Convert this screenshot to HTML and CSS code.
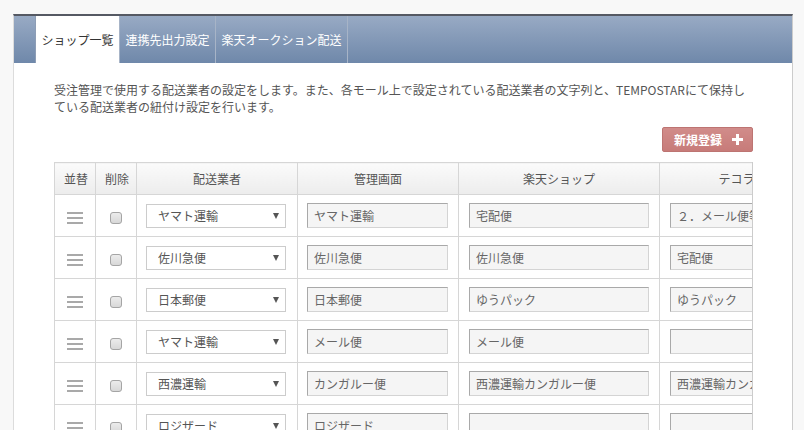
FILE: index.html
```html
<!DOCTYPE html>
<html lang="ja">
<head>
<meta charset="utf-8">
<title>配送業者設定</title>
<link rel="stylesheet" href="styles.css">
</head>
<body>
<div class="page">
  <div class="panel">
    <ul class="tabs">
      <li class="tab active">ショップ一覧</li>
      <li class="tab">連携先出力設定</li>
      <li class="tab">楽天オークション配送</li>
    </ul>
    <div class="content">
      <p class="desc">受注管理で使用する配送業者の設定をします。また、各モール上で設定されている配送業者の文字列と、TEMPOSTARにて保持し<br>ている配送業者の紐付け設定を行います。</p>
      <div class="actions">
        <button class="btn-add" type="button">新規登録<svg class="plus" width="11" height="11" viewBox="0 0 11 11"><rect x="4" y="0" width="3" height="11" fill="#fff"/><rect x="0" y="4" width="11" height="3" fill="#fff"/></svg></button>
      </div>
      <div class="table-wrap">
        <table class="grid">
          <colgroup>
            <col class="c-sort"><col class="c-del"><col class="c-carrier"><col class="c-admin"><col class="c-rakuten"><col class="c-tecoras">
          </colgroup>
          <thead>
            <tr><th>並替</th><th>削除</th><th>配送業者</th><th>管理画面</th><th>楽天ショップ</th><th>テコラス</th></tr>
          </thead>
          <tbody>
            <tr>
              <td class="center"><span class="handle"><i></i><i></i><i></i></span></td>
              <td class="center"><input class="chk" type="checkbox"></td>
              <td class="sel-cell"><div class="select"><select><option>ヤマト運輸</option></select></div></td>
              <td><input class="txt w-admin" type="text" value="ヤマト運輸"></td>
              <td class="pad10"><input class="txt w-rakuten" type="text" value="宅配便"></td>
              <td class="pad10"><input class="txt w-last" type="text" value="２．メール便等"></td>
            </tr>
            <tr>
              <td class="center"><span class="handle"><i></i><i></i><i></i></span></td>
              <td class="center"><input class="chk" type="checkbox"></td>
              <td class="sel-cell"><div class="select"><select><option>佐川急便</option></select></div></td>
              <td><input class="txt w-admin" type="text" value="佐川急便"></td>
              <td class="pad10"><input class="txt w-rakuten" type="text" value="佐川急便"></td>
              <td class="pad10"><input class="txt w-last" type="text" value="宅配便"></td>
            </tr>
            <tr>
              <td class="center"><span class="handle"><i></i><i></i><i></i></span></td>
              <td class="center"><input class="chk" type="checkbox"></td>
              <td class="sel-cell"><div class="select"><select><option>日本郵便</option></select></div></td>
              <td><input class="txt w-admin" type="text" value="日本郵便"></td>
              <td class="pad10"><input class="txt w-rakuten" type="text" value="ゆうパック"></td>
              <td class="pad10"><input class="txt w-last" type="text" value="ゆうパック"></td>
            </tr>
            <tr>
              <td class="center"><span class="handle"><i></i><i></i><i></i></span></td>
              <td class="center"><input class="chk" type="checkbox"></td>
              <td class="sel-cell"><div class="select"><select><option>ヤマト運輸</option></select></div></td>
              <td><input class="txt w-admin" type="text" value="メール便"></td>
              <td class="pad10"><input class="txt w-rakuten" type="text" value="メール便"></td>
              <td class="pad10"><input class="txt w-last" type="text" value=""></td>
            </tr>
            <tr>
              <td class="center"><span class="handle"><i></i><i></i><i></i></span></td>
              <td class="center"><input class="chk" type="checkbox"></td>
              <td class="sel-cell"><div class="select"><select><option>西濃運輸</option></select></div></td>
              <td><input class="txt w-admin" type="text" value="カンガルー便"></td>
              <td class="pad10"><input class="txt w-rakuten" type="text" value="西濃運輸カンガルー便"></td>
              <td class="pad10"><input class="txt w-last" type="text" value="西濃運輸カンガルー便"></td>
            </tr>
            <tr>
              <td class="center"><span class="handle"><i></i><i></i><i></i></span></td>
              <td class="center"><input class="chk" type="checkbox"></td>
              <td class="sel-cell"><div class="select"><select><option>ロジザード</option></select></div></td>
              <td><input class="txt w-admin" type="text" value="ロジザード"></td>
              <td class="pad10"><input class="txt w-rakuten" type="text" value=""></td>
              <td class="pad10"><input class="txt w-last" type="text" value=""></td>
            </tr>
            <tr>
              <td class="center"><span class="handle"><i></i><i></i><i></i></span></td>
              <td class="center"><input class="chk" type="checkbox"></td>
              <td class="sel-cell"><div class="select"><select><option>福山通運</option></select></div></td>
              <td><input class="txt w-admin" type="text" value="福山通運"></td>
              <td class="pad10"><input class="txt w-rakuten" type="text" value=""></td>
              <td class="pad10"><input class="txt w-last" type="text" value=""></td>
            </tr>
          </tbody>
        </table>
      </div>
    </div>
  </div>
</div>
</body>
</html>
```

FILE: styles.css
```css
html, body {
  margin: 0;
  padding: 0;
  overflow: hidden;
}
body {
  background: #f8f8f8;
  font-family: "Noto Sans CJK JP", "Noto Sans", sans-serif;
  font-size: 12px;
  color: #555;
}
.page {
  padding: 14px 11px 0 13px;
}
.panel {
  background: #fff;
  border-top: 2px solid #555963;
  border-left: 1px solid #dcdcdc;
  border-right: 1px solid #cccccc;
  min-height: 420px;
}
.tabs {
  list-style: none;
  margin: 0;
  padding: 0 0 0 21px;
  display: flex;
  height: 47px;
  background: linear-gradient(#98aac4, #6f88aa);
}
.tab {
  display: flex;
  align-items: center;
  padding: 0 5.5px;
  border-left: 1px solid #a7b4c7;
  color: #fff;
  line-height: 1;
  white-space: nowrap;
}
.tab:last-child {
  border-right: 1px solid #a7b4c7;
}
.tab.active {
  background: #fff;
  color: #333;
  border-left-color: #8d9db5;
}
.content {
  padding: 18px 39px 0 40px;
}
.desc {
  margin: 0 -8px 0 0;
  line-height: 17px;
  color: #555;
}
.actions {
  display: flex;
  justify-content: flex-end;
  margin-top: 12px;
}
.btn-add {
  display: flex;
  align-items: center;
  gap: 10px;
  height: 25px;
  padding: 0 9px 0 11px;
  border: 1px solid #bd7472;
  border-radius: 2px;
  background: linear-gradient(#d18c8a, #c77b79);
  color: #fff;
  font-family: inherit;
  font-size: 12px;
  font-weight: bold;
  cursor: pointer;
}
.plus {
  display: block;
}
.table-wrap {
  margin-top: 10px;
  overflow-x: auto;
  border-right: 1px solid #cccccc;
}
.grid {
  border-collapse: collapse;
  table-layout: fixed;
  width: 771px;
}
.c-sort { width: 41px; }
.c-del { width: 41px; }
.c-carrier { width: 161px; }
.c-admin { width: 161px; }
.c-rakuten { width: 201px; }
.c-tecoras { width: 166px; }
.grid th,
.grid td {
  border: 1px solid #d6d6d6;
  padding: 0 9px;
}
.grid th {
  height: 31px;
  background: linear-gradient(#fbfbfb, #ececec);
  font-weight: normal;
  color: #555;
  text-align: center;
  white-space: nowrap;
}
.grid td {
  height: 41px;
  vertical-align: middle;
}
.grid td.center {
  text-align: center;
  padding: 0;
}
.grid td.pad10 {
  padding-left: 10px;
}
.handle {
  display: inline-flex;
  flex-direction: column;
  gap: 3px;
  vertical-align: middle;
  width: 16px;
}
.handle i {
  display: block;
  height: 2px;
  background: #a9a9a9;
}
.chk {
  -webkit-appearance: none;
  appearance: none;
  width: 12px;
  height: 12px;
  margin: 0;
  border: 1px solid #a5a5a5;
  border-radius: 3px;
  background: linear-gradient(#ececec, #d8d8d8);
  vertical-align: middle;
}
.select {
  position: relative;
  width: 140px;
}
.select select {
  -webkit-appearance: none;
  appearance: none;
  display: block;
  width: 140px;
  height: 24px;
  margin: 0;
  padding: 0 20px 0 11px;
  border: 1px solid #cccccc;
  border-radius: 0;
  background: #fff;
  color: #555;
  font-family: inherit;
  font-size: 12px;
}
.select::after {
  content: "";
  position: absolute;
  right: 7px;
  top: 9px;
  border-left: 3px solid transparent;
  border-right: 3px solid transparent;
  border-top: 6px solid #555;
  pointer-events: none;
}
.txt {
  display: block;
  box-sizing: border-box;
  height: 25px;
  margin: 0;
  padding: 0 6px;
  border: 1px solid;
  border-color: #a9a9a9 #d4d4d4 #d4d4d4 #a9a9a9;
  background: #f5f5f5;
  color: #666;
  font-family: inherit;
  font-size: 12px;
}
.w-admin { width: 141px; }
.w-rakuten { width: 180px; }
.w-last { width: 145px; }
```
